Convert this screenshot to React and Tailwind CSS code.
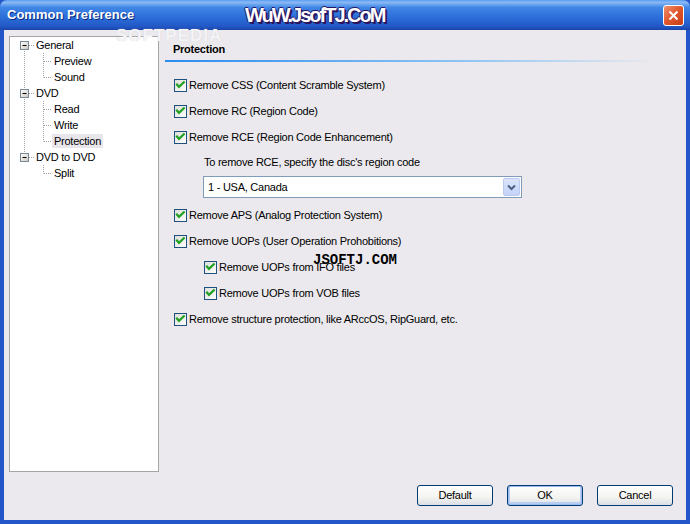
import React from "react";

const tree = [
  { label: "General", level: 0 },
  { label: "Preview", level: 1 },
  { label: "Sound", level: 1 },
  { label: "DVD", level: 0 },
  { label: "Read", level: 1 },
  { label: "Write", level: 1 },
  { label: "Protection", level: 1, selected: true },
  { label: "DVD to DVD", level: 0 },
  { label: "Split", level: 1 },
];

// row centers inside the tree panel (16px rows)
const cy = (i) => 8 + 16 * i;

function TreeLines() {
  const dot = { stroke: "#a0a0a0", strokeWidth: 1, strokeDasharray: "1 1" };
  const groups = [
    { parent: 0, kids: [1, 2] },
    { parent: 3, kids: [4, 5, 6] },
    { parent: 7, kids: [8] },
  ];
  return (
    <svg className="absolute left-0 top-0" width="148" height="160" viewBox="0 0 148 160">
      <defs>
        <linearGradient id="tb" x1="0" y1="0" x2="1" y2="1">
          <stop offset="0" stopColor="#ffffff" />
          <stop offset="1" stopColor="#c9c6bd" />
        </linearGradient>
      </defs>
      <line x1="14.5" y1={cy(0)} x2="14.5" y2={cy(7)} {...dot} />
      {groups.map((g) => (
        <g key={g.parent}>
          <line x1="19" y1={cy(g.parent) + 0.5} x2="24" y2={cy(g.parent) + 0.5} {...dot} />
          <line x1="33.5" y1={cy(g.parent) + 8} x2="33.5" y2={cy(g.kids[g.kids.length - 1]) + 0.5} {...dot} />
          {g.kids.map((k) => (
            <line key={k} x1="34" y1={cy(k) + 0.5} x2="42" y2={cy(k) + 0.5} {...dot} />
          ))}
          <rect x="10.5" y={cy(g.parent) - 3.5} width="8" height="8" fill="url(#tb)" stroke="#7a8a99" />
          <line x1="12.5" y1={cy(g.parent) + 0.5} x2="16.5" y2={cy(g.parent) + 0.5} stroke="#000" />
        </g>
      ))}
    </svg>
  );
}

function Check() {
  return (
    <svg width="13" height="13" viewBox="0 0 13 13" className="shrink-0">
      <defs>
        <linearGradient id="cb" x1="0" y1="0" x2="1" y2="1">
          <stop offset="0" stopColor="#dcdcd7" />
          <stop offset="1" stopColor="#ffffff" />
        </linearGradient>
      </defs>
      <rect x="0.5" y="0.5" width="12" height="12" fill="url(#cb)" stroke="#1c5180" />
      <polyline points="3,5.5 5,7.8 9.8,3.2" fill="none" stroke="#21a121" strokeWidth="2.2" strokeLinecap="square" />
    </svg>
  );
}

function CheckRow({ label, indent }) {
  return (
    <div className={`flex h-[26px] items-center gap-[2px] ${indent ? "pl-[31px]" : "pl-[1px]"}`}>
      <Check />
      <span>{label}</span>
    </div>
  );
}

function Button({ children, primary }) {
  return (
    <button
      className={`h-[21px] w-[76px] rounded-[3px] border border-[#003c74] bg-[linear-gradient(to_bottom,#ffffff,#f3f3ef_60%,#dcdfe6)] text-black ${
        primary ? "shadow-[inset_0_0_0_1px_#9cbcf0,inset_0_-1px_0_2px_#b8cdf3]" : ""
      }`}
    >
      {children}
    </button>
  );
}

export default function App() {
  return (
    <div className="relative h-[524px] w-[690px] overflow-hidden bg-[#2456c9] font-['Liberation_Sans',Arial,sans-serif] text-[11px] tracking-[-0.25px] text-black">
      {/* title bar */}
      <div className="relative flex h-[30px] items-center rounded-t-[7px] bg-[linear-gradient(to_bottom,#5b9df2_0%,#8ab9f4_8%,#3f86e6_25%,#2b6cd8_60%,#2258c6_88%,#1a44a8_100%)] pl-[7px] pr-[6px]">
        <span className="text-[13px] font-bold tracking-normal text-white [text-shadow:1px_1px_0_#0b2a7a]">Common Preference</span>
        <span className="absolute left-[245px] top-[5px] text-[20px] font-bold leading-none tracking-[-2px] text-white [text-shadow:1px_1px_0_#2a1660,-1px_0_0_#2a1660,0_-1px_0_#2a1660,2px_2px_0_#2a1660]">
          WuW.JsofTJ.CoM
        </span>
        <div className="ml-auto flex h-[21px] w-[21px] items-center justify-center rounded-[3px] border border-white bg-[linear-gradient(135deg,#f09070,#e0562b_50%,#c43c16)]">
          <svg width="11" height="11" viewBox="0 0 11 11">
            <path d="M1.5 1.5 L9.5 9.5 M9.5 1.5 L1.5 9.5" stroke="#fff" strokeWidth="2" />
          </svg>
        </div>
      </div>

      {/* body */}
      <div className="relative mx-[4px] mb-[4px] flex h-[490px] flex-col bg-[#ebe9ed]">
        {/* watermarks */}
        <div className="pointer-events-none absolute left-[112px] top-0 z-10 text-[17px] font-bold leading-[12px] tracking-[1px] text-[#f4f3f6] [text-shadow:0_0_1px_#cfcdd2]">
          SOFTPEDIA
        </div>
        <div className="pointer-events-none absolute left-[309px] top-[223px] z-10 font-['Liberation_Mono',monospace] text-[14px] font-bold leading-none tracking-normal text-black">
          JSOFTJ.COM
        </div>

        <div className="flex">
          {/* tree */}
          <div className="relative ml-[5px] mt-[6px] h-[436px] w-[150px] border border-[#a5a5a5] bg-white">
            <TreeLines />
            <div className="relative">
              {tree.map((t) => (
                <div key={t.label} className={`flex h-[16px] items-center ${t.level ? "pl-[42px]" : "pl-[24px]"}`}>
                  <span className={`px-[2px] leading-[14px] ${t.selected ? "bg-[#e8e6eb]" : ""}`}>{t.label}</span>
                </div>
              ))}
            </div>
          </div>

          {/* content */}
          <div className="ml-[6px] mt-[6px] flex-1">
            <div className="pl-[8px] pt-[6px] font-bold leading-[14px]">Protection</div>
            <div className="mr-[30px] mt-[4px] h-[2px] bg-[linear-gradient(to_right,#2a8cf0,#8cc4f4_60%,rgba(235,233,237,0))]" />
            <div className="mt-[10px] pl-[8px]">
              <CheckRow label="Remove CSS (Content Scramble System)" />
              <CheckRow label="Remove RC (Region Code)" />
              <CheckRow label="Remove RCE (Region Code Enhancement)" />
              <div className="flex h-[24px] items-center pl-[31px]">To remove RCE, specify the disc's region code</div>
              <div className="ml-[30px] mt-[2px] flex h-[22px] w-[319px] items-center border border-[#7f9db9] bg-white pl-[4px] pr-[1px]">
                <span className="flex-1">1 - USA, Canada</span>
                <div className="flex h-[18px] w-[17px] items-center justify-center rounded-[2px] border border-[#b9c9ef] bg-[linear-gradient(to_bottom,#dbe5fb,#c3d3f8)]">
                  <svg width="9" height="7" viewBox="0 0 9 7">
                    <path d="M1 1.5 L4.5 5 L8 1.5" fill="none" stroke="#4d6185" strokeWidth="2" />
                  </svg>
                </div>
              </div>
              <div className="mt-[4px]">
                <CheckRow label="Remove APS (Analog Protection System)" />
                <CheckRow label="Remove UOPs (User Operation Prohobitions)" />
                <CheckRow indent label="Remove UOPs from IFO files" />
                <CheckRow indent label="Remove UOPs from VOB files" />
                <CheckRow label="Remove structure protection, like ARccOS, RipGuard, etc." />
              </div>
            </div>
          </div>
        </div>

        {/* buttons */}
        <div className="mt-[13px] flex justify-end gap-[14px] pr-[13px]">
          <Button>Default</Button>
          <Button primary>OK</Button>
          <Button>Cancel</Button>
        </div>
      </div>
    </div>
  );
}
